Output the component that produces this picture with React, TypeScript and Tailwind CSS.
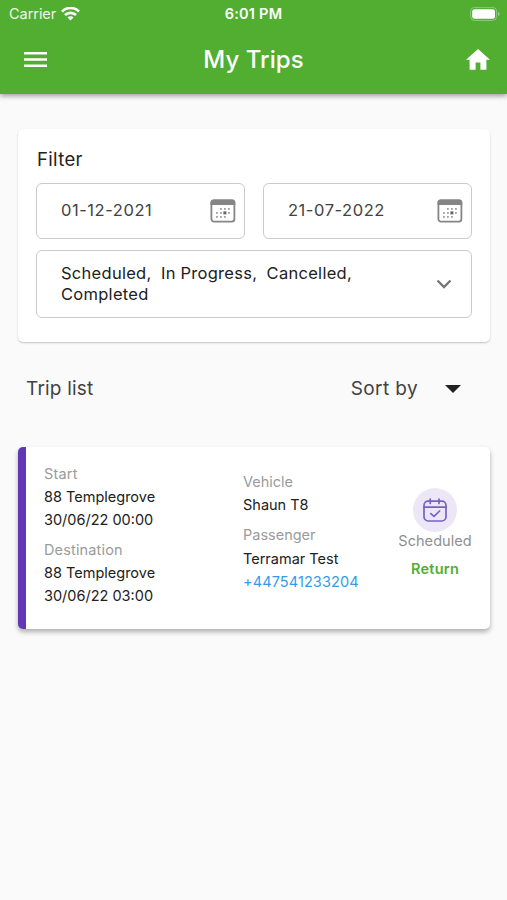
import React from "react";

function WifiIcon() {
  return (
    <svg className="ml-[5px] h-3.5 w-[19px]" viewBox="0 0 19 14" fill="none" stroke="#fff" strokeWidth="2.7">
      <path d="M1 4.6C5.7-.2 13.3-.2 18 4.6" />
      <path d="M4 8c3-2.9 8-2.9 11 0" />
      <path d="M6.5 10.4c1.6-1.6 4.4-1.6 6 0l-3 3z" fill="#fff" stroke="none" />
    </svg>
  );
}

function BatteryIcon() {
  return (
    <svg className="h-3.5 w-[30px]" viewBox="0 0 30 14" fill="none">
      <rect x=".6" y=".6" width="26" height="12.8" rx="4" stroke="#fff" strokeOpacity=".35" />
      <rect x="2.2" y="2.2" width="22.8" height="9.6" rx="2.4" fill="#fff" />
      <path d="M28 4.8c2 .7 2 3.7 0 4.4z" fill="#fff" fillOpacity=".4" />
    </svg>
  );
}

function DateField({ value }: { value: string }) {
  return (
    <div className="flex h-14 w-[209px] items-center justify-between rounded-md border border-[#cbcbcb] pr-2 pb-px pl-6">
      <span className="text-[16.5px] tracking-[0.55px] text-[#424242]">{value}</span>
      <svg className="h-6 w-[26px]" viewBox="0 0 26 24">
        <rect x="1.4" y="1.4" width="23" height="21.2" rx="2.6" fill="#fff" stroke="#858585" strokeWidth="1.8" />
        <path d="M.5 6V3.5C.5 1.7 1.7.5 3.4.5h19c1.8 0 2.9 1.2 2.9 3V6z" fill="#858585" />
        <g fill="#a0a0a0">
          {[10, 14, 18].map((x) => <rect key={x} x={x} y="9" width="1.8" height="1.8" />)}
          {[6, 10, 14, 18].map((x) => <rect key={x} x={x} y="13" width="1.8" height="1.8" />)}
          {[6, 10, 14].map((x) => <rect key={x} x={x} y="17" width="1.8" height="1.8" />)}
          <rect x="13.4" y="12.4" width="3" height="3" fill="#666" />
        </g>
      </svg>
    </div>
  );
}

function ScheduledIcon() {
  return (
    <div className="flex size-11 items-center justify-center rounded-full bg-[#ebe7f7]">
      <svg className="size-[26px]" viewBox="0 0 26 26" fill="none" stroke="#7562c4" strokeWidth="1.7" strokeLinecap="round" strokeLinejoin="round">
        <rect x="2" y="4.2" width="22" height="19.8" rx="4.2" />
        <path d="M2 10.2h22M8.2 2v4.4M17 2v4.4M8.8 16.6l3.2 2.8 5.6-5.4" />
      </svg>
    </div>
  );
}

const label = "text-[#9b9b9b]";

export default function App() {
  return (
    <div className="h-[900px] w-[507px] overflow-hidden bg-[#fafafa] font-['Inter',sans-serif] text-[#212121]">
      <header className="h-[94px] bg-[#51ae31] text-white shadow-[0_2px_5px_rgba(0,0,0,0.38)]">
        <div className="grid h-[27px] grid-cols-3 items-center px-[7px]">
          <div className="flex items-center pl-0.5">
            <span className="text-[14.5px] tracking-[-0.05px] text-white/90">Carrier</span>
            <WifiIcon />
          </div>
          <span className="text-center text-[14.5px] font-semibold tracking-[0.25px]">6:01 PM</span>
          <div className="flex justify-end"><BatteryIcon /></div>
        </div>
        <div className="grid h-[65px] grid-cols-3 items-center px-[17px]">
          <svg className="ml-[7px] h-[17px] w-[23px]" viewBox="0 0 23 17" fill="#fff">
            <path d="M0 1h23v2.5H0zM0 7.2h23v2.5H0zM0 13.4h23v2.5H0z" />
          </svg>
          <h1 className="text-center text-[24px] font-medium tracking-[0.05px] whitespace-nowrap">My Trips</h1>
          <svg className="h-[22px] w-6 justify-self-end" viewBox="0 0 24 22" fill="#fff">
            <path d="M9.6 20.7v-7.3h4.8v7.3h6v-9.9H24L12 0 0 10.8h3.6v9.9z" />
          </svg>
        </div>
      </header>

      <section className="mr-[17px] ml-[18px] mt-[35px] h-[213px] rounded-[5px] bg-white px-[18px] pt-[18px] shadow-[0_1px_2px_rgba(0,0,0,0.22)]">
        <h2 className="pl-px text-[18.5px] leading-[25px] tracking-[0.35px]">Filter</h2>
        <div className="mt-[11px] flex justify-between">
          <DateField value="01-12-2021" />
          <DateField value="21-07-2022" />
        </div>
        <div className="mt-[11px] flex h-[68px] items-center justify-between rounded-md border border-[#cbcbcb] pr-4 pl-6">
          <p className="text-[16.5px] leading-[21px] tracking-[0.28px] [word-spacing:-0.2px] whitespace-pre">{"Scheduled,  In Progress,  Cancelled,\nCompleted"}</p>
          <svg className="h-5 w-[22px]" viewBox="0 0 22 20" fill="none" stroke="#757575" strokeWidth="2.3">
            <path d="M4.5 6.5 11 13l6.5-6.5" />
          </svg>
        </div>
      </section>

      <div className="mt-[31px] flex h-8 items-center pr-[46px] pl-[26px] text-[19px] text-[#424242]">
        <span className="tracking-[0.2px]">Trip list</span>
        <span className="ml-auto tracking-[0.4px]">Sort by</span>
        <svg className="ml-[27px] h-2 w-4" viewBox="0 0 16 8" fill="#212121"><path d="M0 0h16L8 8z" /></svg>
      </div>

      <article className="mr-[17px] ml-[18px] mt-[42px] flex h-[182px] rounded-[5px] border-l-8 border-[#6236b4] bg-white text-[14.5px] leading-[23px] whitespace-nowrap shadow-[0_3px_5px_rgba(0,0,0,0.3)]">
        <div className="w-[200px] pt-[15px] pl-[18px]">
          <p className="tracking-[0.2px] text-[#9b9b9b]">Start</p>
          <p>88 Templegrove</p>
          <p>30/06/22 00:00</p>
          <p className="mt-[7px] tracking-[0.15px] text-[#9b9b9b]">Destination</p>
          <p>88 Templegrove</p>
          <p>30/06/22 03:00</p>
        </div>
        <div className="w-[154px] pt-[23px] pl-[17px]">
          <p className={label}>Vehicle</p>
          <p>Shaun T8</p>
          <p className="mt-[7px] text-[#9b9b9b]">Passenger</p>
          <p className="mt-px">Terramar Test</p>
          <p className="tracking-[0.1px] text-[#349be8]">+447541233204</p>
        </div>
        <div className="flex w-[110px] flex-col items-center pt-[41px]">
          <ScheduledIcon />
          <p className="-mt-[3px] tracking-[0.05px] text-[#8f8f8f]">Scheduled</p>
          <p className="mt-[5px] font-semibold tracking-[0.25px] text-[#51ae31]">Return</p>
        </div>
      </article>
    </div>
  );
}
